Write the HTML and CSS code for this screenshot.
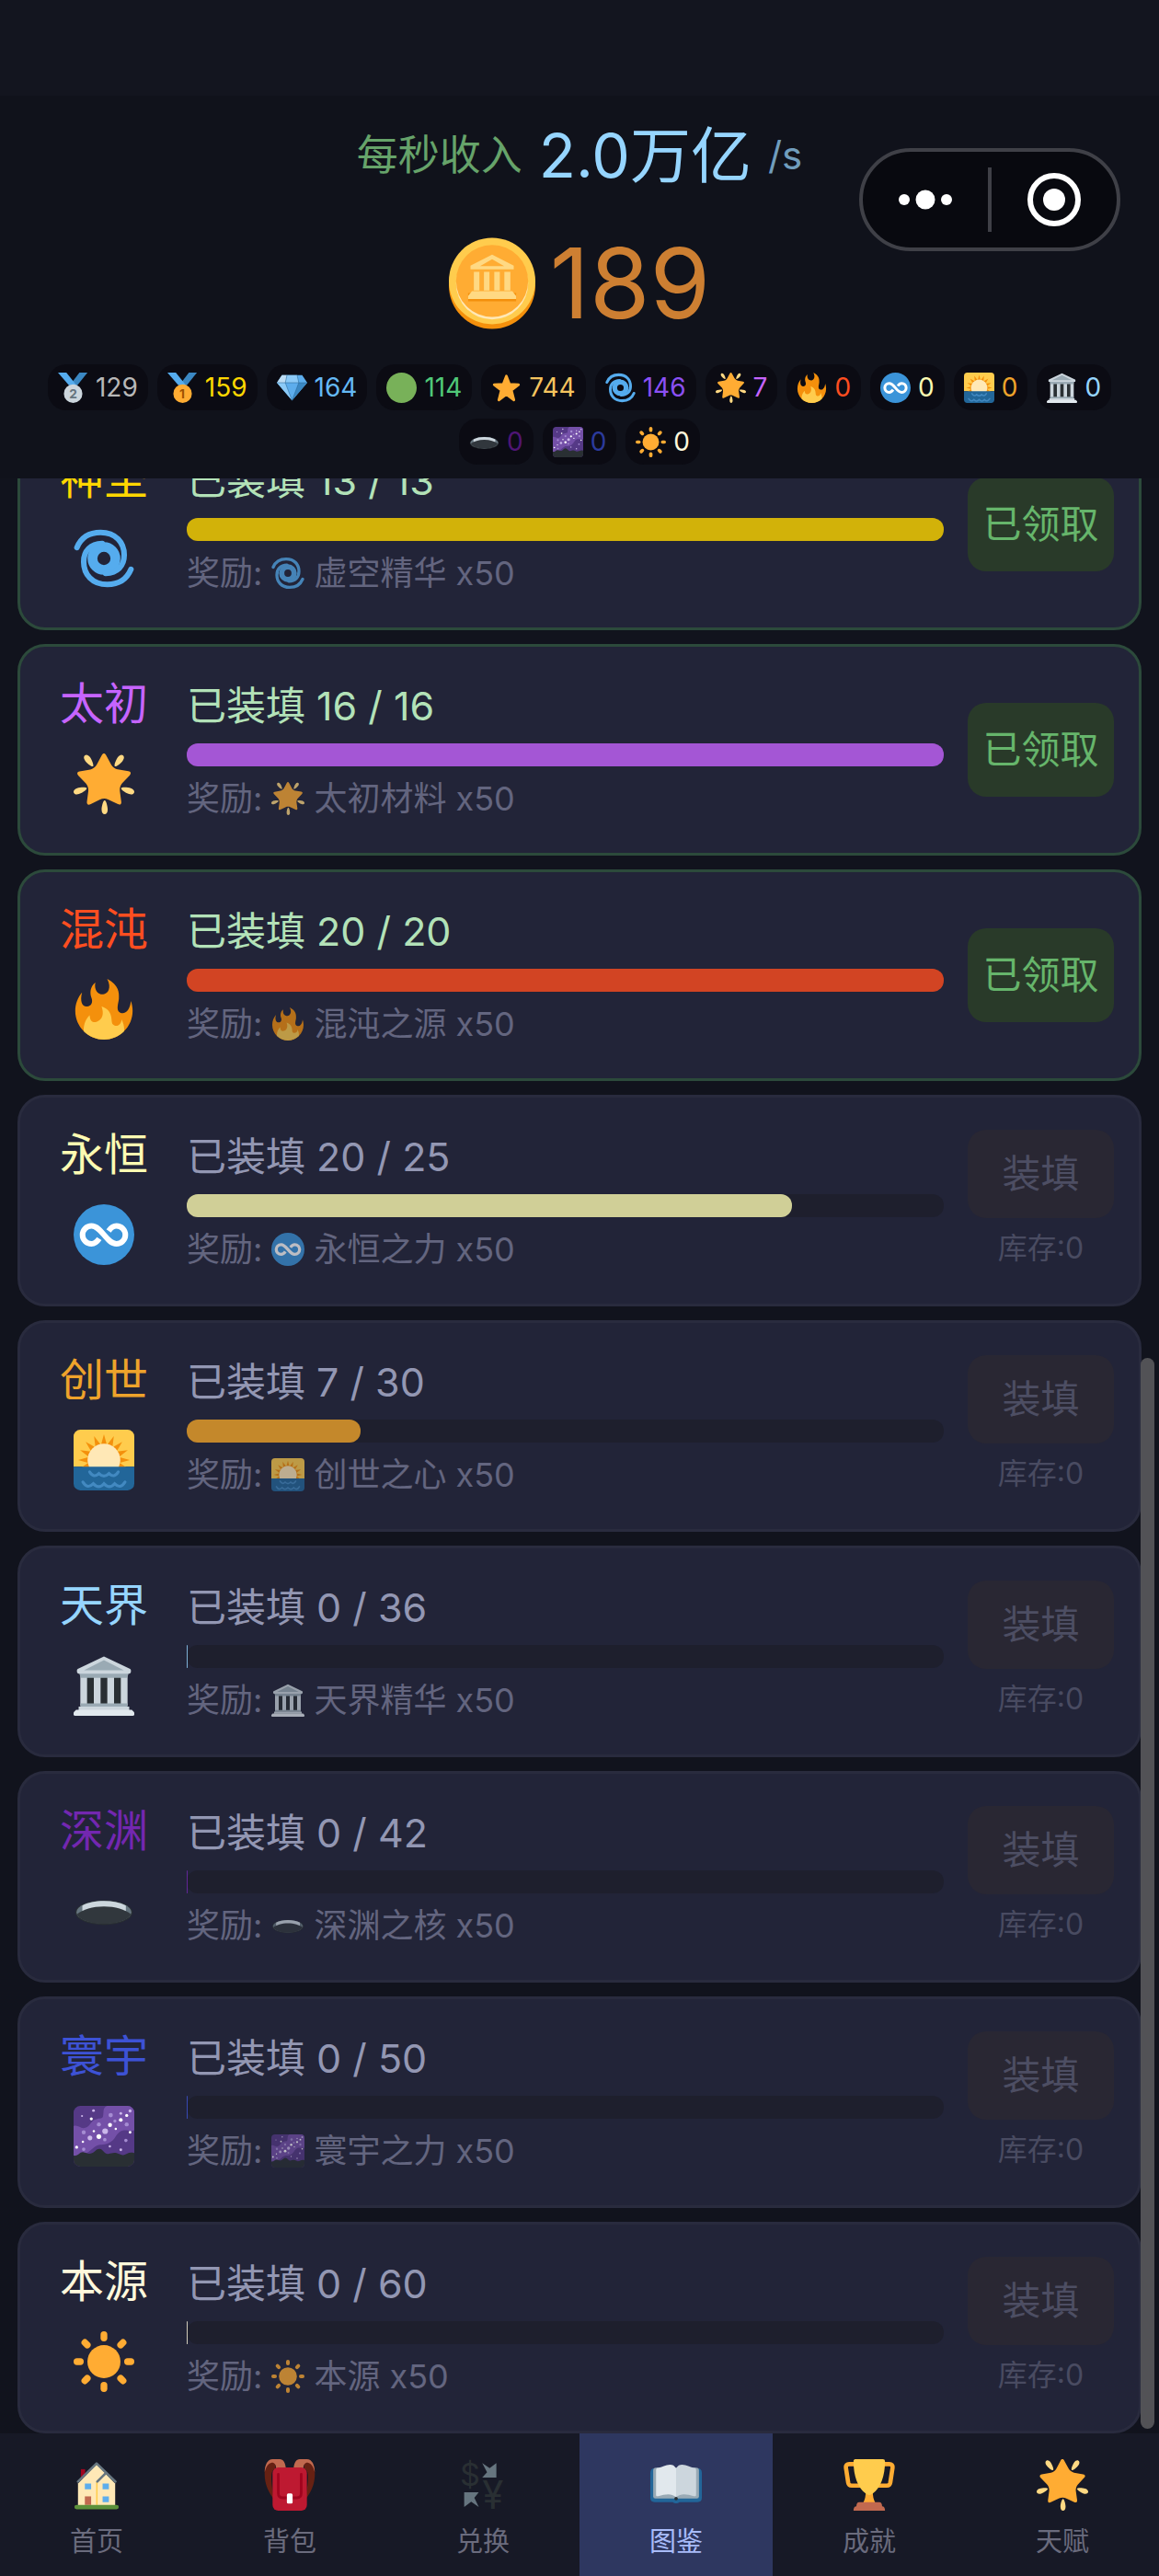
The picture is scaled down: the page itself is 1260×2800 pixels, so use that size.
FILE: index.html
```html
<!DOCTYPE html>
<html lang="zh-CN">
    <head>
        <meta charset="UTF-8">
        <meta name="viewport" content="width=device-width, initial-scale=1.0">
        <title>图鉴</title>
        <link rel="stylesheet" href="styles.css">
    </head>
    <body>
        <!-- shared icons -->
        <svg class="sprite" aria-hidden="true">
            <symbol id="i-coin" viewBox="0 0 36 38">
                <circle cx="18" cy="20" r="18" fill="#F4900C"/>
                <circle cx="18" cy="18" r="18" fill="#FFCC4D"/>
                <circle cx="18" cy="19" r="15" fill="#FFE8B6"/>
                <circle cx="18" cy="18" r="15" fill="#FFAC33"/>
                <path fill="#F4900C" d="M8 23h20v3.5H8z"/>
                <path fill="#FFD983" d="M18 7l9 4.6v1.6H9v-1.6zM10.4 14.2h2.3V22h-2.3zm4.2 0h2.3V22h-2.3zm4.3 0h2.3V22h-2.3zm4.2 0h2.5V22h-2.5zM9.6 22.3h16.8l1.6 2v1.2H8v-1.2z"/>
                <path fill="#FFAC33" d="M18 8.9l5 2.9H13z"/>
            </symbol>
            <symbol id="i-gem" viewBox="0 0 36 36">
                <path fill="#5DADEC" d="M6 3h24l6 9-18 21L0 12z"/>
                <path fill="#BDDDF4" d="M6 3h6l-1 9H0z"/>
                <path fill="#8CCAF7" d="M12 3h12l2 9H10zM0 12h10l8 21z"/>
                <path fill="#3B88C3" d="M26 12h10L18 33z"/>
                <path fill="none" stroke="#2A6797" stroke-width=".6" d="M0 12h36M10 12l8 21 8-21M12 3l-2 9M24 3l2 9"/>
            </symbol>
            <symbol id="i-green" viewBox="0 0 36 36">
                <circle cx="18" cy="18" r="18" fill="#78B159"/>
            </symbol>
            <symbol id="i-star" viewBox="0 0 36 36">
                <path fill="#FFAC33" stroke="#FFAC33" stroke-width="3" stroke-linejoin="round" d="M18 4l3.8 9.8 10.7.5-8.5 6.5 3 11.7-9-6.6-9 6.6 3-11.7-8.500-6.500 10.700-.5z"/>
            </symbol>
            <symbol id="i-cyclone" viewBox="0 0 36 36">
                <g fill="none" stroke="#55ACEE" stroke-width="3.300" stroke-linecap="round">
                    <circle cx="18" cy="18" r="6.800" stroke-width="5.800"/>
                    <path d="M2 11.500C4.500 5.500 9.500 2.600 16 2.600c9 0 14 6 14 13.400 0 6.500-4 10.500-11 10.800"/>
                    <path d="M34 24.500c-2.500 6-7.500 8.900-14 8.900-9 0-14-6-14-13.400C6 13.500 10 9.500 17 9.200"/>
                </g>
            </symbol>
            <symbol id="i-glow" viewBox="0 0 36 36">
                <path fill="#FFAC33" d="M28.84 17.638c-.987 1.044-1.633 3.067-1.438 4.493l.892 6.441c.197 1.427-.701 2.087-1.996 1.469l-5.851-2.796c-1.295-.62-3.408-.611-4.7.018l-5.826 2.842c-1.291.629-2.193-.026-2.007-1.452l.843-6.449c.186-1.427-.475-3.444-1.47-4.481l-4.494-4.688c-.996-1.037-.655-2.102.755-2.365l6.37-1.188c1.41-.263 3.116-1.518 3.793-2.789L16.762.956c.675-1.271 1.789-1.274 2.473-.009L22.33 6.66c.686 1.265 2.4 2.507 3.814 2.758l6.378 1.141c1.412.252 1.761 1.314.774 2.359l-4.456 4.72z"/>
                <path fill="#FFD983" d="M9.783 2.181c1.023 1.413 2.446 4.917 1.717 5.447-.728.531-3.607-1.91-4.63-3.323-1.022-1.413-.935-2.668-.131-3.254.804-.587 2.02-.282 3.044 1.13zm19.348 2.124C28.109 5.718 25.23 8.16 24.5 7.627c-.729-.53.695-4.033 1.719-5.445C27.242.768 28.457.463 29.262 1.051c.803.586.89 1.841-.131 3.254zM16.625 33.291c-.001-1.746.898-5.421 1.801-5.421.899 0 1.798 3.675 1.797 5.42 0 1.747-.804 2.712-1.8 2.71-.994.002-1.798-.962-1.798-2.709zm16.179-9.262c-1.655-.539-4.858-2.533-4.579-3.395.277-.858 4.037-.581 5.69-.041 1.655.54 2.321 1.605 2.013 2.556-.308.95-1.469 1.42-3.124.88zM2.083 20.594c1.655-.54 5.414-.817 5.694.044.276.857-2.928 2.854-4.581 3.392-1.654.54-2.818.07-3.123-.88-.308-.95.354-2.015 2.01-2.556z"/>
            </symbol>
            <symbol id="i-fire" viewBox="0 0 36 36">
                <path fill="#F4900C" d="M35 19c0-2.062-.367-4.039-1.04-5.868-.46 5.389-3.333 8.157-6.335 6.868-2.812-1.208-.917-5.917-.777-8.164.236-3.809-.012-8.169-6.931-11.794 2.875 5.5.333 8.917-2.333 9.125-2.958.231-5.667-2.542-4.667-7.042-3.238 2.386-3.332 6.402-2.333 9 1.042 2.708-.042 4.958-2.583 5.208-2.84.28-4.418-3.041-2.963-8.333C2.52 10.965 1 14.805 1 19c0 9.389 7.611 17 17 17s17-7.611 17-17z"/>
                <path fill="#FFCC4D" d="M28.394 23.999c.148 3.084-2.561 4.293-4.019 3.709-2.106-.843-1.541-2.291-2.083-5.291s-2.625-5.083-5.708-6c2.25 6.333-1.247 8.667-3.08 9.084-1.872.426-3.753-.001-3.968-4.007C7.352 23.668 6 26.676 6 30c0 .368.023.73.055 1.09C9.125 34.124 13.342 36 18 36s8.875-1.876 11.945-4.91c.032-.36.055-.722.055-1.09 0-2.187-.584-4.236-1.606-6.001z"/>
            </symbol>
            <symbol id="i-infinity" viewBox="0 0 36 36">
                <circle cx="18" cy="18" r="18" fill="#3B94D9"/>
                <path fill="none" stroke="#fff" stroke-width="3.300" d="M15.200 20.400c-1.400 2.100-2.900 3-4.600 3a5.300 5.300 0 0 1 0-10.600c6 0 8.800 10.600 14.800 10.600a5.300 5.300 0 0 0 0-10.600c-1.700 0-3.200.9-4.600 3"/>
            </symbol>
            <symbol id="i-sunrise" viewBox="0 0 36 36">
                <path fill="#FFCC4D" d="M0 22V4a4 4 0 0 1 4-4h28a4 4 0 0 1 4 4v18z"/>
                <g fill="#F4900C">
                    <path id="ray" d="M16 10l2-7.300L20 10z"/>
                    <use href="#ray" transform="rotate(22.500 18 18)"/>
                    <use href="#ray" transform="rotate(45 18 18)"/>
                    <use href="#ray" transform="rotate(67.500 18 18)"/>
                    <use href="#ray" transform="rotate(90 18 18)"/>
                    <use href="#ray" transform="rotate(110 18 18)"/>
                    <use href="#ray" transform="rotate(-22.500 18 18)"/>
                    <use href="#ray" transform="rotate(-45 18 18)"/>
                    <use href="#ray" transform="rotate(-67.500 18 18)"/>
                    <use href="#ray" transform="rotate(-90 18 18)"/>
                    <use href="#ray" transform="rotate(-110 18 18)"/>
                </g>
                <circle cx="18" cy="18" r="9.700" fill="#FFE8B6"/>
                <path fill="#226699" d="M0 22h36v10a4 4 0 0 1-4 4H4a4 4 0 0 1-4-4z"/>
                <path fill="none" stroke="#4289C1" stroke-width="1.700" stroke-linecap="round" d="M9.500 25q2.500 4 5.500 1 3 3 6 0 3 3 5.500-1M5.500 31q2.800 4.500 6.200 1 3.200 3.500 6.300 0 3.200 3.500 6.300 0 3.400 3.500 6.200-1"/>
            </symbol>
            <symbol id="i-temple" viewBox="0 0 36 36">
                <path fill="#292F33" d="M5 12h26v18H5z"/>
                <path fill="#CCD6DD" d="M4 12h4v18H4zm8 0h4v18h-4zm8 0h4v18h-4zm8 0h4v18h-4z"/>
                <path fill="#9AAAB4" d="M3.500 10h29v1.500L31.500 13.500h-27l-1-2zM4 28.700h28v2H4z"/>
                <path fill="#CCD6DD" d="M18 .8l15.500 7.400q.5.300.5.800v1q0 1-1 1H3q-1 0-1-1V9q0-.5.500-.800zM3 30.500h30v2.200H3z"/>
                <path fill="#9AAAB4" d="M18 3l11.800 6H6.200z"/>
                <path fill="#E1E8ED" d="M1.500 32.500h33L36 34v1q0 1-1 1H1q-1 0-1-1v-1z"/>
            </symbol>
            <symbol id="i-hole" viewBox="0 0 36 36">
                <ellipse cx="18" cy="19" rx="17" ry="7.300" fill="#292F33"/>
                <ellipse cx="18" cy="18.800" rx="16.300" ry="6.700" fill="#66757F"/>
                <path fill="#CCD6DD" d="M5.200 18.200v-3.400C8.500 13 13 12.100 18 12.100s9.500.9 13 2.700v3.400z"/>
                <path fill="#31373D" d="M2 20c3.500-2.800 9.300-4.600 16-4.600S30.500 17.200 34 20c-1.500 3.300-8.200 5.700-16 5.700S3.500 23.300 2 20z"/>
            </symbol>
            <symbol id="i-galaxy" viewBox="0 0 36 36">
                <rect width="36" height="36" rx="4" fill="#553986"/>
                <path fill="#7450A8" d="M20 0h12a4 4 0 0 1 4 4v10.500c-3 1-5-1-8 .5s-3 5-7 7-5 0-8 2-5 5-9 5l-4 1V12c3-1 4 2 7 1s3-4 6-5 4 0 4.500-2S17 1 20 0z"/>
                <path fill="#292F33" d="M0 29.500c3 .5 3.500-2.500 6-2s3 1.500 5 .5 2.500-2.700 4.500-2.500 3 3.300 5 3 3-1 5-.5 2.500 1.500 4.500 1 2.500-1.800 6-1V32a4 4 0 0 1-4 4H4a4 4 0 0 1-4-4z"/>
                <g fill="#A58CD2">
                    <circle cx="22" cy="5.500" r="1.300"/><circle cx="15" cy="11" r="1.200"/><circle cx="31.500" cy="11" r="1.200"/>
                    <circle cx="6" cy="15.700" r="1.200"/><circle cx="18.500" cy="20" r="1"/><circle cx="31" cy="20.500" r="1"/>
                    <circle cx="24.500" cy="9" r=".9"/><circle cx="6" cy="25.700" r="1"/>
                </g>
                <g fill="#CBB7EA">
                    <circle cx="18.700" cy="15" r="1.700"/><circle cx="9.700" cy="19" r="1.400"/><circle cx="28" cy="4.500" r=".8"/>
                    <circle cx="11.800" cy="2.800" r=".8"/><circle cx="5" cy="6" r=".6"/><circle cx="28" cy="26" r=".8"/>
                    <circle cx="21.500" cy="24" r=".7"/><circle cx="33.500" cy="3" r=".9"/>
                </g>
                <g fill="#fff">
                    <circle cx="10.500" cy="7.700" r=".9"/><circle cx="21.600" cy="11.300" r="1.200"/><circle cx="28" cy="8.300" r="1.100"/>
                    <circle cx="31.500" cy="5.700" r=".9"/><circle cx="25" cy="13.600" r=".7"/><circle cx="15" cy="18.200" r="1.400"/>
                    <circle cx="12" cy="15" r=".7"/><circle cx="33.500" cy="15.700" r=".8"/><circle cx="5.500" cy="21.300" r=".7"/>
                    <circle cx="1.800" cy="24.500" r=".9"/>
                </g>
            </symbol>
            <symbol id="i-sun" viewBox="0 0 36 36">
                <g fill="#FFAC33">
                    <circle cx="18" cy="18" r="9.800"/>
                    <rect id="beam" x="16" y="0" width="4" height="6" rx="2"/>
                    <use href="#beam" transform="rotate(45 18 18)"/>
                    <use href="#beam" transform="rotate(90 18 18)"/>
                    <use href="#beam" transform="rotate(135 18 18)"/>
                    <use href="#beam" transform="rotate(180 18 18)"/>
                    <use href="#beam" transform="rotate(225 18 18)"/>
                    <use href="#beam" transform="rotate(270 18 18)"/>
                    <use href="#beam" transform="rotate(315 18 18)"/>
                </g>
            </symbol>
            <symbol id="i-home" viewBox="0 0 36 36">
                <path fill="#A0041E" d="M7 7h3v7H7z"/>
                <path fill="#FFE8B6" d="M18 3.500L31 17v15.500H5V17z"/>
                <path fill="#FFCC4D" d="M17.700 16h1v16h-1z"/>
                <path fill="none" stroke="#66757F" stroke-width="1.700" stroke-linecap="round" stroke-linejoin="round" d="M5 15.700L18 3l13.200 12.700M18.500 15.700l5.500-5.500"/>
                <path fill="#5DADEC" d="M9.800 17h4.400v4H9.800zm12.400 0h4.400v4h-4.400zm0 9h4.400v4h-4.400z"/>
                <path fill="#C1694F" d="M9.800 26h4.400v6H9.800z"/>
                <rect x="2.500" y="32" width="31" height="3" rx="1.500" fill="#5C913B"/>
            </symbol>
            <symbol id="i-bag" viewBox="0 0 36 36">
                <path fill="#662113" d="M7 28C2 22 0 15 .5 8 1 3 4 1 8 2v5c-3 0-4 4-1 21zM29 28c5-6 7-13 6.500-20C35 3 32 1 28 2v5c3 0 4 4 1 21z"/>
                <path fill="#C1694F" d="M.5 9C.5 4 2.500 0 6 0h5c2.500 0 4 2.500 4.300 6.500H8.500C8.500 3.500 7 2 5 2.500S1.500 5 .5 9zM35.500 9c0-5-2-9-5.500-9h-5c-2.500 0-4 2.500-4.300 6.500h6.800c0-3 1.500-4.500 3.500-4S34.500 5 35.500 9z"/>
                <rect x="6" y="5.800" width="24" height="30.200" rx="4" fill="#BE1931"/>
                <path fill="none" stroke="#A0041E" stroke-width="1.800" stroke-linecap="round" d="M10 10.500V24q0 3 3 3h10q3 0 3-3V10.500"/>
                <rect x="16" y="24" width="4" height="7" rx="1" fill="#fff"/>
            </symbol>
            <symbol id="i-book" viewBox="0 0 36 36">
                <path fill="#226699" d="M3 6.500h30q3 0 3 3V27q0 3-3 3H20.500q-2.500 1.800-5 0H3q-3 0-3-3V9.500q0-3 3-3z"/>
                <path fill="#99AAB5" d="M4 6h28q2 0 2 2v18q0 1.500-1.500 1.500h-29Q2 27.500 2 26V8q0-2 2-2z"/>
                <path fill="#E1E8ED" d="M18 6.500C16.500 3.600 14 3.600 11.500 4.200 8.500 5 7 6 4.500 6.200 4 7 4 7.500 4 8v17c0 .8.500 1 1.500.8 5-1.300 9-2.300 12.500.7z"/>
                <path fill="#CCD6DD" d="M18 6.500c1.500-2.900 4-2.900 6.500-2.300 3 .8 4.500 1.800 7 2 .5.800.5 1.300.5 1.800v17c0 .8-.5 1-1.500.8-5-1.300-9-2.300-12.500.7z"/>
                <circle cx="18" cy="27.500" r="1.200" fill="#292F33"/>
            </symbol>
            <symbol id="i-trophy" viewBox="0 0 36 36">
                <path fill="none" stroke="#FFAC33" stroke-width="3" d="M9 3.500H4Q1.500 3.500 1.700 6l1.600 10.500q.4 2 2.400 2H12M27 3.500h5q2.500 0 2.300 2.500l-1.600 10.500q-.4 2-2.400 2H24"/>
                <path fill="#FFAC33" d="M15.500 22h5q-.3 5 2 9h-9q2.300-4 2-9z"/>
                <path fill="#FFCC4D" d="M8.500 0h19Q29 0 29 1.500C29 12 26 20 20.500 24q-2.500 2-5 0C10 20 7 12 7 1.500 7 0 8.500 0 8.500 0z"/>
                <path fill="#C1694F" d="M11 30h14q2 0 2 3 2 0 2 3H7q0-3 2-3 0-3 2-3z"/>
            </symbol>
        </svg>

        <header class="header">
            <div class="income">
                <span class="income-label">每秒收入</span>
                <span class="income-value">2.0万亿</span>
                <span class="income-unit">/s</span>
            </div>
            <div class="balance">
                <svg class="coin"><use href="#i-coin"/></svg>
                <span>189</span>
            </div>
            <ul class="materials">
                <li class="silver">
                    <svg viewBox="0 0 36 36">
                        <path fill="#3B88C3" d="M25.500 0H35L23 15h-9z"/>
                        <path fill="#55ACEE" d="M0 0h10l12 15h-9z"/>
                        <circle cx="18" cy="25" r="11" fill="#CCD6DD"/>
                        <text x="18" y="30.500" font-size="15" font-weight="700" text-anchor="middle" fill="#66757F">2</text>
                    </svg>129
                </li>
                <li class="gold">
                    <svg viewBox="0 0 36 36">
                        <path fill="#3B88C3" d="M25.500 0H35L23 15h-9z"/>
                        <path fill="#55ACEE" d="M0 0h10l12 15h-9z"/>
                        <circle cx="18" cy="25" r="11" fill="#FFAC33"/>
                        <text x="17.500" y="30.500" font-size="15" font-weight="700" text-anchor="middle" fill="#9E5200">1</text>
                    </svg>159
                </li>
                <li class="gem"><svg><use href="#i-gem"/></svg>164</li>
                <li class="green"><svg><use href="#i-green"/></svg>114</li>
                <li class="star"><svg><use href="#i-star"/></svg>744</li>
                <li class="void"><svg><use href="#i-cyclone"/></svg>146</li>
                <li class="taichu"><svg><use href="#i-glow"/></svg>7</li>
                <li class="chaos"><svg><use href="#i-fire"/></svg>0</li>
                <li class="eternal"><svg><use href="#i-infinity"/></svg>0</li>
                <li class="genesis"><svg><use href="#i-sunrise"/></svg>0</li>
                <li class="heaven"><svg><use href="#i-temple"/></svg>0</li>
                <li class="abyss-dim"><svg><use href="#i-hole"/></svg>0</li>
                <li class="cosmos-dim"><svg><use href="#i-galaxy"/></svg>0</li>
                <li class="origin"><svg><use href="#i-sun"/></svg>0</li>
            </ul>
            <div class="capsule">
                <button type="button" aria-label="更多">
                    <svg width="60" height="24" viewBox="0 0 60 24" fill="#fff"><circle cx="7" cy="12" r="6"/><circle cx="30" cy="12" r="10.500"/><circle cx="53" cy="12" r="6"/></svg>
                </button>
                <button type="button" aria-label="关闭">
                    <svg width="60" height="60" viewBox="0 0 60 60"><circle cx="30" cy="30" r="26" fill="none" stroke="#fff" stroke-width="6"/><circle cx="30" cy="30" r="12" fill="#fff"/></svg>
                </button>
            </div>
        </header>

        <main class="album">
            <div class="list">
                <section class="card done">
                    <div class="tier"><h2 class="gold">神圣</h2><svg><use href="#i-cyclone"/></svg></div>
                    <div class="info">
                        <p class="count">已装填 13 / 13</p>
                        <div class="bar gold"><div class="fill" style="width:100%"></div></div>
                        <p class="reward">奖励: <svg><use href="#i-cyclone"/></svg> 虚空精华 x50</p>
                    </div>
                    <div class="action"><button type="button" disabled>已领取</button></div>
                </section>
                <section class="card done">
                    <div class="tier"><h2 class="taichu">太初</h2><svg><use href="#i-glow"/></svg></div>
                    <div class="info">
                        <p class="count">已装填 16 / 16</p>
                        <div class="bar taichu"><div class="fill" style="width:100%"></div></div>
                        <p class="reward">奖励: <svg><use href="#i-glow"/></svg> 太初材料 x50</p>
                    </div>
                    <div class="action"><button type="button" disabled>已领取</button></div>
                </section>
                <section class="card done">
                    <div class="tier"><h2 class="chaos">混沌</h2><svg><use href="#i-fire"/></svg></div>
                    <div class="info">
                        <p class="count">已装填 20 / 20</p>
                        <div class="bar chaos"><div class="fill" style="width:100%"></div></div>
                        <p class="reward">奖励: <svg><use href="#i-fire"/></svg> 混沌之源 x50</p>
                    </div>
                    <div class="action"><button type="button" disabled>已领取</button></div>
                </section>
                <section class="card">
                    <div class="tier"><h2 class="eternal">永恒</h2><svg><use href="#i-infinity"/></svg></div>
                    <div class="info">
                        <p class="count">已装填 20 / 25</p>
                        <div class="bar eternal"><div class="fill" style="width:80%"></div></div>
                        <p class="reward">奖励: <svg><use href="#i-infinity"/></svg> 永恒之力 x50</p>
                    </div>
                    <div class="action"><button type="button" disabled>装填</button><span>库存:0</span></div>
                </section>
                <section class="card">
                    <div class="tier"><h2 class="genesis">创世</h2><svg><use href="#i-sunrise"/></svg></div>
                    <div class="info">
                        <p class="count">已装填 7 / 30</p>
                        <div class="bar genesis"><div class="fill" style="width:23%"></div></div>
                        <p class="reward">奖励: <svg><use href="#i-sunrise"/></svg> 创世之心 x50</p>
                    </div>
                    <div class="action"><button type="button" disabled>装填</button><span>库存:0</span></div>
                </section>
                <section class="card">
                    <div class="tier"><h2 class="heaven">天界</h2><svg><use href="#i-temple"/></svg></div>
                    <div class="info">
                        <p class="count">已装填 0 / 36</p>
                        <div class="bar heaven"><div class="fill" style="width:0%"></div></div>
                        <p class="reward">奖励: <svg><use href="#i-temple"/></svg> 天界精华 x50</p>
                    </div>
                    <div class="action"><button type="button" disabled>装填</button><span>库存:0</span></div>
                </section>
                <section class="card">
                    <div class="tier"><h2 class="abyss">深渊</h2><svg><use href="#i-hole"/></svg></div>
                    <div class="info">
                        <p class="count">已装填 0 / 42</p>
                        <div class="bar abyss"><div class="fill" style="width:0%"></div></div>
                        <p class="reward">奖励: <svg><use href="#i-hole"/></svg> 深渊之核 x50</p>
                    </div>
                    <div class="action"><button type="button" disabled>装填</button><span>库存:0</span></div>
                </section>
                <section class="card">
                    <div class="tier"><h2 class="cosmos">寰宇</h2><svg><use href="#i-galaxy"/></svg></div>
                    <div class="info">
                        <p class="count">已装填 0 / 50</p>
                        <div class="bar cosmos"><div class="fill" style="width:0%"></div></div>
                        <p class="reward">奖励: <svg><use href="#i-galaxy"/></svg> 寰宇之力 x50</p>
                    </div>
                    <div class="action"><button type="button" disabled>装填</button><span>库存:0</span></div>
                </section>
                <section class="card">
                    <div class="tier"><h2 class="origin">本源</h2><svg><use href="#i-sun"/></svg></div>
                    <div class="info">
                        <p class="count">已装填 0 / 60</p>
                        <div class="bar origin"><div class="fill" style="width:0%"></div></div>
                        <p class="reward">奖励: <svg><use href="#i-sun"/></svg> 本源 x50</p>
                    </div>
                    <div class="action"><button type="button" disabled>装填</button><span>库存:0</span></div>
                </section>
            </div>
            <div class="thumb"></div>
        </main>

        <nav class="tabs">
            <a href="#home"><svg><use href="#i-home"/></svg>首页</a>
            <a href="#bag"><svg><use href="#i-bag"/></svg>背包</a>
            <a href="#exchange">
                <svg viewBox="0 0 36 36">
                    <text x="9" y="18.500" font-size="22" text-anchor="middle" fill="#292F33">$</text>
                    <text x="25" y="35" font-size="27" text-anchor="middle" fill="#292F33">¥</text>
                    <path fill="#66757F" d="M17.500 2.800l5.200 3.400 4.700-3.400v10.100h-9.900l3.400-3.700zM4.900 23.100h10.200L12 27l3.100 6.400-5.300-3.600-4.900 3.600z"/>
                </svg>兑换
            </a>
            <a href="#album" class="active"><svg><use href="#i-book"/></svg>图鉴</a>
            <a href="#trophy"><svg><use href="#i-trophy"/></svg>成就</a>
            <a href="#talent"><svg><use href="#i-glow"/></svg>天赋</a>
        </nav>
    </body>
</html>
```
FILE: styles.css
```css
*{
    box-sizing: border-box;
}
body{
    display: flex;
    flex-direction: column;
    height: 100vh;
    margin: 0;
    background: #11131d;
    color: #9397b3;
    font-family: Inter, "Noto Sans CJK SC", sans-serif;
}
h2, p, ul{
    margin: 0;
    padding: 0;
    font-weight: 400;
}
button{
    border: none;
    padding: 0;
    font-family: inherit;
}
.sprite{
    position: absolute;
    width: 0;
    height: 0;
}

/* tier colours */
.silver{ color: #b8b8b8; }
.gold{ color: #ffd700; }
.gem{ color: #64b8f5; }
.green{ color: #50c878; }
.star{ color: #f5c45e; }
.void{ color: #8b50f5; }
.taichu{ color: #c664ff; }
.chaos{ color: #ff4e20; }
.eternal{ color: #fdfbb2; }
.genesis{ color: #eea32b; }
.heaven{ color: #96d5ff; }
.abyss{ color: #7327b0; }
.cosmos{ color: #3d52d5; }
.origin{ color: #fff8dc; }
.abyss-dim{ color: #4f1574; }
.cosmos-dim{ color: #2b3a9c; }

/* header */
.header{
    position: relative;
    border-top: 104px solid #13151f;
    padding: 21px 20px 15px;
    background: #10121b;
}
.income{
    display: flex;
    justify-content: center;
    align-items: center;
    gap: 18px;
    margin-bottom: 45px;
    line-height: 88px;
}
.income-label{
    font-size: 45px;
    color: #66a36a;
}
.income-value{
    font-size: 66px;
    color: #96d5ff;
}
.income-unit{
    font-size: 42px;
    color: #709dbd;
}
.balance{
    display: flex;
    justify-content: center;
    align-items: center;
    gap: 16px;
    margin-bottom: 38px;
    font-size: 106px;
    line-height: 100px;
    color: #cd7f32;
}
.coin{
    width: 94px;
    height: 100px;
}
.materials{
    display: flex;
    flex-wrap: wrap;
    justify-content: center;
    gap: 9px 10px;
    list-style: none;
}
.materials li{
    display: flex;
    align-items: center;
    gap: 8px;
    padding: 0 11px;
    border-radius: 20px;
    background: #0b0b13;
    font-size: 28px;
    line-height: 50px;
}
.materials svg{
    width: 33px;
    height: 33px;
}
.capsule{
    position: absolute;
    top: 57px;
    right: 42px;
    display: flex;
    align-items: center;
    width: 284px;
    height: 112px;
    border: 4px solid #3f4047;
    border-radius: 56px;
    background: #08090f;
}
.capsule button{
    display: flex;
    flex: 1;
    justify-content: center;
    align-items: center;
    height: 70px;
    background: none;
}
.capsule button + button{
    border-left: 4px solid #3f4047;
}

/* card list, scrolled to the end */
.album{
    position: relative;
    flex: 1;
    min-height: 0;
}
.list{
    display: flex;
    flex-direction: column;
    justify-content: flex-end;
    gap: 15px;
    height: 100%;
    padding: 0 19px;
    overflow: hidden;
}
.card{
    display: flex;
    flex-shrink: 0;
    align-items: center;
    gap: 26px;
    height: 230px;
    padding: 0 27px;
    border: 3px solid #292b3e;
    border-radius: 30px;
    background: #222438;
}
.card.done{
    border-color: #2c4a3b;
}
.tier{
    display: flex;
    flex-direction: column;
    align-items: center;
    gap: 14px;
    width: 128px;
}
.tier h2{
    font-size: 48px;
    line-height: 60px;
}
.tier svg{
    width: 66px;
    height: 86px;
}
.info{
    flex: 1;
}
.count{
    font-size: 43px;
    line-height: 60px;
}
.done .count{
    color: #b3e2b8;
}
.bar{
    height: 25px;
    margin: 11px 0 9px;
    border-radius: 12px;
    background: #1e1f2d;
}
.fill{
    min-width: 1px;
    height: 100%;
    border-radius: 12px;
    background: currentColor;
    opacity: .8;
}
.reward{
    display: flex;
    align-items: center;
    gap: 10px;
    font-size: 36px;
    line-height: 52px;
    color: #63657f;
}
.reward svg{
    width: 36px;
    height: 36px;
    opacity: .7;
}
.action{
    display: flex;
    flex-direction: column;
    align-items: center;
    gap: 8px;
    width: 159px;
    font-size: 32px;
    line-height: 50px;
    color: #494b61;
}
.action button{
    width: 100%;
    height: 96px;
    padding-bottom: 7px;
    border-radius: 20px;
    background: #292733;
    font-size: 42px;
    color: #4d4e63;
}
.done .action button{
    height: 102px;
    background: #293a29;
    color: #66b56b;
}
.thumb{
    position: absolute;
    top: 45%;
    right: 5px;
    bottom: 5px;
    width: 15px;
    border-radius: 8px;
    background: #525256;
}

/* bottom tabs */
.tabs{
    display: flex;
    background: #171926;
}
.tabs a{
    display: flex;
    flex: 1;
    flex-direction: column;
    align-items: center;
    gap: 14px;
    padding: 28px 0 17px;
    font-size: 29px;
    line-height: 40px;
    color: #6a6b7d;
    text-decoration: none;
}
.tabs a.active{
    background: #2e3760;
    color: #a9bcfa;
}
.tabs svg{
    width: 56px;
    height: 56px;
}
```
